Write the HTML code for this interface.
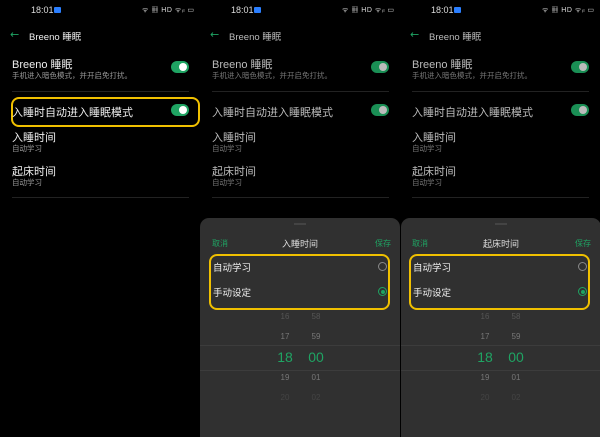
<!DOCTYPE html>
<html><head><meta charset="utf-8"><style>
*{margin:0;padding:0;box-sizing:border-box}
body{width:600px;height:437px;background:#000;overflow:hidden;position:relative;font-family:"Liberation Sans","Noto Sans CJK SC",sans-serif;color:#fff}
.p{position:absolute;top:0;width:200px;height:437px;overflow:hidden}
.a{position:absolute;white-space:nowrap}
.st{top:5px;left:31px;font-size:9px;color:#ddd}
.sq{top:7px;left:54px;width:7px;height:6px;background:#2b7fff;border-radius:1px}
.si{top:5px;left:142px;font-size:7px;color:#ddd;letter-spacing:.5px}
.back{top:28px;left:10px;color:#1fa463 !important;font-size:11px;font-family:"DejaVu Sans",sans-serif}
.tt{top:29px;left:29px;font-size:9.5px;color:#eee}
.t1{font-size:11px;color:#eee}
.t2{font-size:7.5px;color:#999}
.tg{width:18px;height:12px;border-radius:6px;background:#1fa463}
.tg::after{content:"";position:absolute;right:2px;top:2px;width:8px;height:8px;border-radius:50%;background:#fff}
.dim .tg{background:#1a8f55}.dim .tg::after{background:#bbb}
.dim .t1{color:#bbb}.dim .t2{color:#777}.dim .tt{color:#bbb}
.ln{left:12px;width:177px;height:1px;background:#222}
.hb{border:2px solid #f0c000;border-radius:8px}
.sh{position:absolute;top:218px;width:200px;height:219px;background:#303030;border-radius:9px 9px 0 0}
.g{color:#1fa463;font-size:8px}
.r{width:9px;height:9px;border-radius:50%;border:1px solid #888}
.r2{border-color:#1fa463}.r2::after{content:"";position:absolute;left:1.5px;top:1.5px;width:4px;height:4px;border-radius:50%;background:#1fa463}
.n{font-size:8px;color:#777;width:24px;text-align:center}
.big{font-size:14px;color:#1fa463}
</style></head><body>

<div class="p" style="left:0">
<div class="a st">18:01</div><div class="a sq"></div><div class="a si">ᯤ ▦ HD ᯤᵢₗ ▭</div>
<div class="a back">←</div><div class="a tt">Breeno 睡眠</div>
<div class="a t1" style="top:56px;left:12px">Breeno 睡眠</div>
<div class="a t2" style="top:70px;left:12px">手机进入暗色模式，并开启免打扰。</div>
<div class="a tg" style="top:61px;left:171px"></div>
<div class="a ln" style="top:91px"></div>
<div class="a hb" style="top:97px;left:11px;width:189px;height:30px"></div>
<div class="a t1" style="top:104px;left:12px">入睡时自动进入睡眠模式</div>
<div class="a tg" style="top:104px;left:171px"></div>
<div class="a t1" style="top:129px;left:12px">入睡时间</div>
<div class="a t2" style="top:143px;left:12px">自动学习</div>
<div class="a t1" style="top:163px;left:12px">起床时间</div>
<div class="a t2" style="top:177px;left:12px">自动学习</div>
<div class="a ln" style="top:197px"></div>
</div>

<div class="p dim" style="left:200px">
<div class="a st">18:01</div><div class="a sq"></div><div class="a si">ᯤ ▦ HD ᯤᵢₗ ▭</div>
<div class="a back">←</div><div class="a tt">Breeno 睡眠</div>
<div class="a t1" style="top:56px;left:12px">Breeno 睡眠</div>
<div class="a t2" style="top:70px;left:12px">手机进入暗色模式，并开启免打扰。</div>
<div class="a tg" style="top:61px;left:171px"></div>
<div class="a ln" style="top:91px"></div>
<div class="a t1" style="top:104px;left:12px">入睡时自动进入睡眠模式</div>
<div class="a tg" style="top:104px;left:171px"></div>
<div class="a t1" style="top:129px;left:12px">入睡时间</div>
<div class="a t2" style="top:143px;left:12px">自动学习</div>
<div class="a t1" style="top:163px;left:12px">起床时间</div>
<div class="a t2" style="top:177px;left:12px">自动学习</div>
<div class="a ln" style="top:197px"></div>
<div class="sh" style="left:0">
<div class="a" style="top:5px;left:94px;width:12px;height:2px;background:#444"></div>
<div class="a g" style="top:20px;left:12px">取消</div>
<div class="a" style="top:19px;left:0;width:200px;text-align:center;font-size:9px;color:#ddd">入睡时间</div>
<div class="a g" style="top:20px;left:175px">保存</div>
<div class="a hb" style="top:36px;left:9px;width:181px;height:56px"></div>
<div class="a" style="top:42px;left:13px;font-size:9.5px;color:#eee">自动学习</div>
<div class="a r" style="top:44px;left:178px"></div>
<div class="a" style="top:67px;left:13px;font-size:9.5px;color:#eee">手动设定</div>
<div class="a r r2" style="top:69px;left:178px"></div>
<div class="a n" style="top:94px;left:73px;color:#555">16</div><div class="a n" style="top:94px;left:104px;color:#555">58</div>
<div class="a n" style="top:114px;left:73px">17</div><div class="a n" style="top:114px;left:104px">59</div>
<div class="a" style="top:127px;left:0;width:200px;height:1px;background:#3c3c3c"></div>
<div class="a n big" style="top:131px;left:73px">18</div><div class="a n big" style="top:131px;left:104px">00</div>
<div class="a" style="top:152px;left:0;width:200px;height:1px;background:#3c3c3c"></div>
<div class="a n" style="top:155px;left:73px">19</div><div class="a n" style="top:155px;left:104px">01</div>
<div class="a n" style="top:175px;left:73px;color:#444">20</div><div class="a n" style="top:175px;left:104px;color:#444">02</div>
</div>
</div>

<div class="p dim" style="left:400px">
<div class="a st">18:01</div><div class="a sq"></div><div class="a si">ᯤ ▦ HD ᯤᵢₗ ▭</div>
<div class="a back">←</div><div class="a tt">Breeno 睡眠</div>
<div class="a t1" style="top:56px;left:12px">Breeno 睡眠</div>
<div class="a t2" style="top:70px;left:12px">手机进入暗色模式，并开启免打扰。</div>
<div class="a tg" style="top:61px;left:171px"></div>
<div class="a ln" style="top:91px"></div>
<div class="a t1" style="top:104px;left:12px">入睡时自动进入睡眠模式</div>
<div class="a tg" style="top:104px;left:171px"></div>
<div class="a t1" style="top:129px;left:12px">入睡时间</div>
<div class="a t2" style="top:143px;left:12px">自动学习</div>
<div class="a t1" style="top:163px;left:12px">起床时间</div>
<div class="a t2" style="top:177px;left:12px">自动学习</div>
<div class="a ln" style="top:197px"></div>
<div class="sh" style="left:1px">
<div class="a" style="top:5px;left:94px;width:12px;height:2px;background:#444"></div>
<div class="a g" style="top:20px;left:11px">取消</div>
<div class="a" style="top:19px;left:0;width:200px;text-align:center;font-size:9px;color:#ddd">起床时间</div>
<div class="a g" style="top:20px;left:174px">保存</div>
<div class="a hb" style="top:36px;left:8px;width:181px;height:56px"></div>
<div class="a" style="top:42px;left:12px;font-size:9.5px;color:#eee">自动学习</div>
<div class="a r" style="top:44px;left:177px"></div>
<div class="a" style="top:67px;left:12px;font-size:9.5px;color:#eee">手动设定</div>
<div class="a r r2" style="top:69px;left:177px"></div>
<div class="a n" style="top:94px;left:72px;color:#555">16</div><div class="a n" style="top:94px;left:103px;color:#555">58</div>
<div class="a n" style="top:114px;left:72px">17</div><div class="a n" style="top:114px;left:103px">59</div>
<div class="a" style="top:127px;left:0;width:200px;height:1px;background:#3c3c3c"></div>
<div class="a n big" style="top:131px;left:72px">18</div><div class="a n big" style="top:131px;left:103px">00</div>
<div class="a" style="top:152px;left:0;width:200px;height:1px;background:#3c3c3c"></div>
<div class="a n" style="top:155px;left:72px">19</div><div class="a n" style="top:155px;left:103px">01</div>
<div class="a n" style="top:175px;left:72px;color:#444">20</div><div class="a n" style="top:175px;left:103px;color:#444">02</div>
</div>
</div>
</body></html>
